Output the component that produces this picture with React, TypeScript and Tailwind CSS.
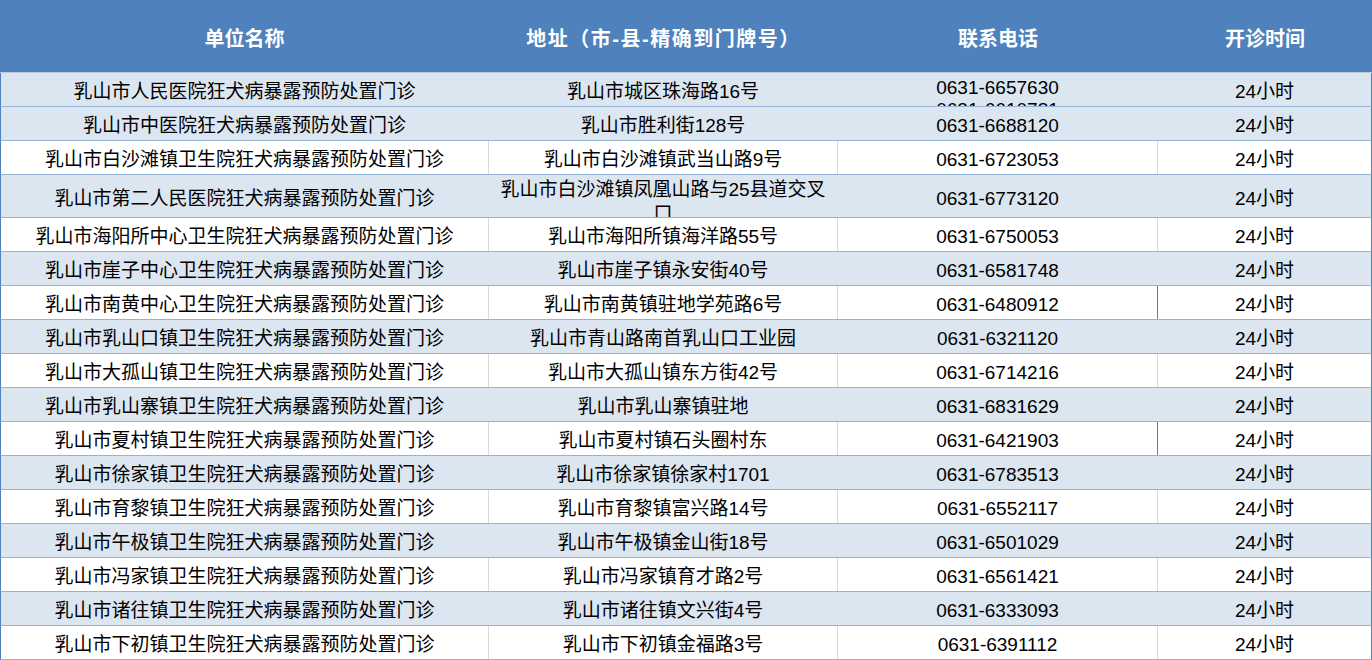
import React from "react";

type Clinic = {
  name: string;
  address: React.ReactNode;
  phone: React.ReactNode;
  hours: string;
};

const clinics: Clinic[] = [
  {
    name: "乳山市人民医院狂犬病暴露预防处置门诊",
    address: "乳山市城区珠海路16号",
    phone: (
      <>
        0631-6657630
        <br />
        0631-6610781
      </>
    ),
    hours: "24小时",
  },
  { name: "乳山市中医院狂犬病暴露预防处置门诊", address: "乳山市胜利街128号", phone: "0631-6688120", hours: "24小时" },
  { name: "乳山市白沙滩镇卫生院狂犬病暴露预防处置门诊", address: "乳山市白沙滩镇武当山路9号", phone: "0631-6723053", hours: "24小时" },
  {
    name: "乳山市第二人民医院狂犬病暴露预防处置门诊",
    address: (
      <>
        乳山市白沙滩镇凤凰山路与25县道交叉
        <br />口
      </>
    ),
    phone: "0631-6773120",
    hours: "24小时",
  },
  { name: "乳山市海阳所中心卫生院狂犬病暴露预防处置门诊", address: "乳山市海阳所镇海洋路55号", phone: "0631-6750053", hours: "24小时" },
  { name: "乳山市崖子中心卫生院狂犬病暴露预防处置门诊", address: "乳山市崖子镇永安街40号", phone: "0631-6581748", hours: "24小时" },
  { name: "乳山市南黄中心卫生院狂犬病暴露预防处置门诊", address: "乳山市南黄镇驻地学苑路6号", phone: "0631-6480912", hours: "24小时" },
  { name: "乳山市乳山口镇卫生院狂犬病暴露预防处置门诊", address: "乳山市青山路南首乳山口工业园", phone: "0631-6321120", hours: "24小时" },
  { name: "乳山市大孤山镇卫生院狂犬病暴露预防处置门诊", address: "乳山市大孤山镇东方街42号", phone: "0631-6714216", hours: "24小时" },
  { name: "乳山市乳山寨镇卫生院狂犬病暴露预防处置门诊", address: "乳山市乳山寨镇驻地", phone: "0631-6831629", hours: "24小时" },
  { name: "乳山市夏村镇卫生院狂犬病暴露预防处置门诊", address: "乳山市夏村镇石头圈村东", phone: "0631-6421903", hours: "24小时" },
  { name: "乳山市徐家镇卫生院狂犬病暴露预防处置门诊", address: "乳山市徐家镇徐家村1701", phone: "0631-6783513", hours: "24小时" },
  { name: "乳山市育黎镇卫生院狂犬病暴露预防处置门诊", address: "乳山市育黎镇富兴路14号", phone: "0631-6552117", hours: "24小时" },
  { name: "乳山市午极镇卫生院狂犬病暴露预防处置门诊", address: "乳山市午极镇金山街18号", phone: "0631-6501029", hours: "24小时" },
  { name: "乳山市冯家镇卫生院狂犬病暴露预防处置门诊", address: "乳山市冯家镇育才路2号", phone: "0631-6561421", hours: "24小时" },
  { name: "乳山市诸往镇卫生院狂犬病暴露预防处置门诊", address: "乳山市诸往镇文兴街4号", phone: "0631-6333093", hours: "24小时" },
  { name: "乳山市下初镇卫生院狂犬病暴露预防处置门诊", address: "乳山市下初镇金福路3号", phone: "0631-6391112", hours: "24小时" },
];

// rows with a blue fill (the rest are white)
const blueRows = [0, 1, 3, 5, 7, 9, 11, 13, 15];

export default function App() {
  return (
    <div
      className="w-[1372px] h-[660px] overflow-hidden bg-white text-black"
      style={{ fontFamily: '"Liberation Sans", "Noto Sans CJK SC", sans-serif' }}
    >
      <div className="flex h-[73px] bg-[#4f81bd] border-b border-[#b8cce4] text-white font-bold text-[20px]">
        <div className="w-[489px] flex items-center justify-center pt-[5px]">单位名称</div>
        <div className="w-[349px] flex items-center justify-center pt-[5px] tracking-[1.5px]">
          地址（市-县-精确到门牌号）
        </div>
        <div className="w-[320px] flex items-center justify-center pt-[5px]">联系电话</div>
        <div className="flex-1 flex items-center justify-center pt-[5px]">开诊时间</div>
      </div>

      {clinics.map((c, i) => {
        const isBlue = blueRows.includes(i);
        const tall = i === 3;
        const first = i === 0;
        const blueLine = i === 6 || i === 10;
        const sep = isBlue ? "border-transparent" : "border-[#dadada]";
        return (
          <div
            key={i}
            className={`flex text-[19px] border-b border-x border-b-[#95b3d7] border-x-[#4f81bd] ${
              isBlue ? "bg-[#dce6f1]" : "bg-white"
            } ${tall ? "h-[43px]" : "h-[34px]"}`}
          >
            <div className={`w-[488px] border-r ${sep} flex items-center justify-center pt-[6px] whitespace-nowrap`}>
              {c.name}
            </div>
            <div
              className={`w-[349px] border-r ${sep} flex justify-center text-center overflow-hidden ${
                tall ? "items-start leading-[24px] pt-[3px]" : "items-center pt-[6px]"
              }`}
            >
              <div>{c.address}</div>
            </div>
            <div
              className={`w-[320px] border-r ${blueLine ? "border-[#4f81bd]" : sep} flex justify-center overflow-hidden ${
                first ? "items-start leading-[22px] pt-[4px]" : "items-center pt-[6px]"
              }`}
            >
              <div>{c.phone}</div>
            </div>
            <div className="flex-1 flex items-center justify-center pt-[6px]">{c.hours}</div>
          </div>
        );
      })}
    </div>
  );
}
